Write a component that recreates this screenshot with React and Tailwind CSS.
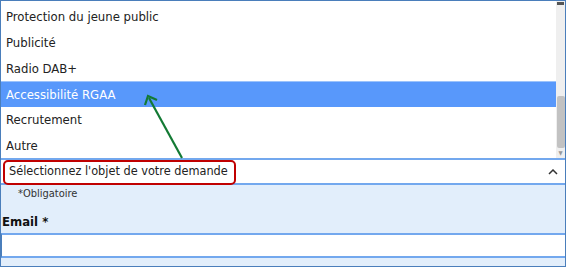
import React from "react";

const options = [
  "Protection du jeune public",
  "Publicité",
  "Radio DAB+",
  "Accessibilité RGAA",
  "Recrutement",
  "Autre",
];

export default function App() {
  return (
    <div
      className="relative w-[566px] h-[267px] overflow-hidden bg-white border border-[#4a7ebb] text-[#222]"
      style={{ fontFamily: "Tahoma, 'DejaVu Sans Condensed', 'DejaVu Sans', sans-serif" }}
    >
      {/* open listbox */}
      <div className="flex h-[157px]">
        <ul className="flex-1 pt-[3px]">
          {options.map((opt, i) => (
            <li
              key={opt}
              className={`h-[26px] flex items-center pl-[5px] text-[13px] ${
                i === 3
                  ? "bg-[#5898fb] text-white border-t border-[#9cc3fb] -mt-[1px]"
                  : ""
              }`}
            >
              {opt}
            </li>
          ))}
        </ul>
        <div className="w-[9px] bg-[#efefef] flex flex-col items-center">
          <div className="w-[7px] h-[3px] bg-[#555] mt-[1px]" />
          <div className="flex-1" />
          <div className="w-[8px] h-[52px] bg-[#c2c2c2] rounded-[2px]" />
          <div className="text-[6px] leading-none text-[#999] py-[2px]">▼</div>
        </div>
      </div>

      {/* select */}
      <div className="h-[27px] border-y-2 border-[#73a8ee] flex items-center justify-between pl-[8px] pr-[8px]">
        <span className="text-[12.6px]">Sélectionnez l'objet de votre demande</span>
        <svg width="10" height="6" viewBox="0 0 10 6" className="mr-[-1px]">
          <path d="M1 5 L5 1 L9 5" fill="none" stroke="#333" strokeWidth="1.5" />
        </svg>
      </div>

      {/* helper + label */}
      <div className="h-[48px] bg-[#e2eefb] flex flex-col">
        <span className="pl-[17px] pt-[1px] text-[11px] text-[#333] leading-[16px]">*Obligatoire</span>
        <span className="pl-[1px] mt-[12px] text-[13px] font-bold text-[#111] leading-[16px]">Email *</span>
      </div>

      {/* input */}
      <div className="h-[25px] bg-white border-y-2 border-[#73a8ee] border-l border-l-[#4a7ebb]" />
      <div className="h-full bg-[#e2eefb]" />

      {/* annotation box */}
      <div className="absolute left-[2px] top-[159px] w-[233px] h-[25px] border-2 border-[#c00000] rounded-[5px]" />

      {/* annotation arrow */}
      <svg className="absolute left-0 top-0" width="566" height="267">
        <line x1="181" y1="157" x2="148" y2="97" stroke="#137a34" strokeWidth="2.2" />
        <path d="M144 104 L147 95 L156 99" fill="none" stroke="#137a34" strokeWidth="2.2" />
      </svg>
    </div>
  );
}
